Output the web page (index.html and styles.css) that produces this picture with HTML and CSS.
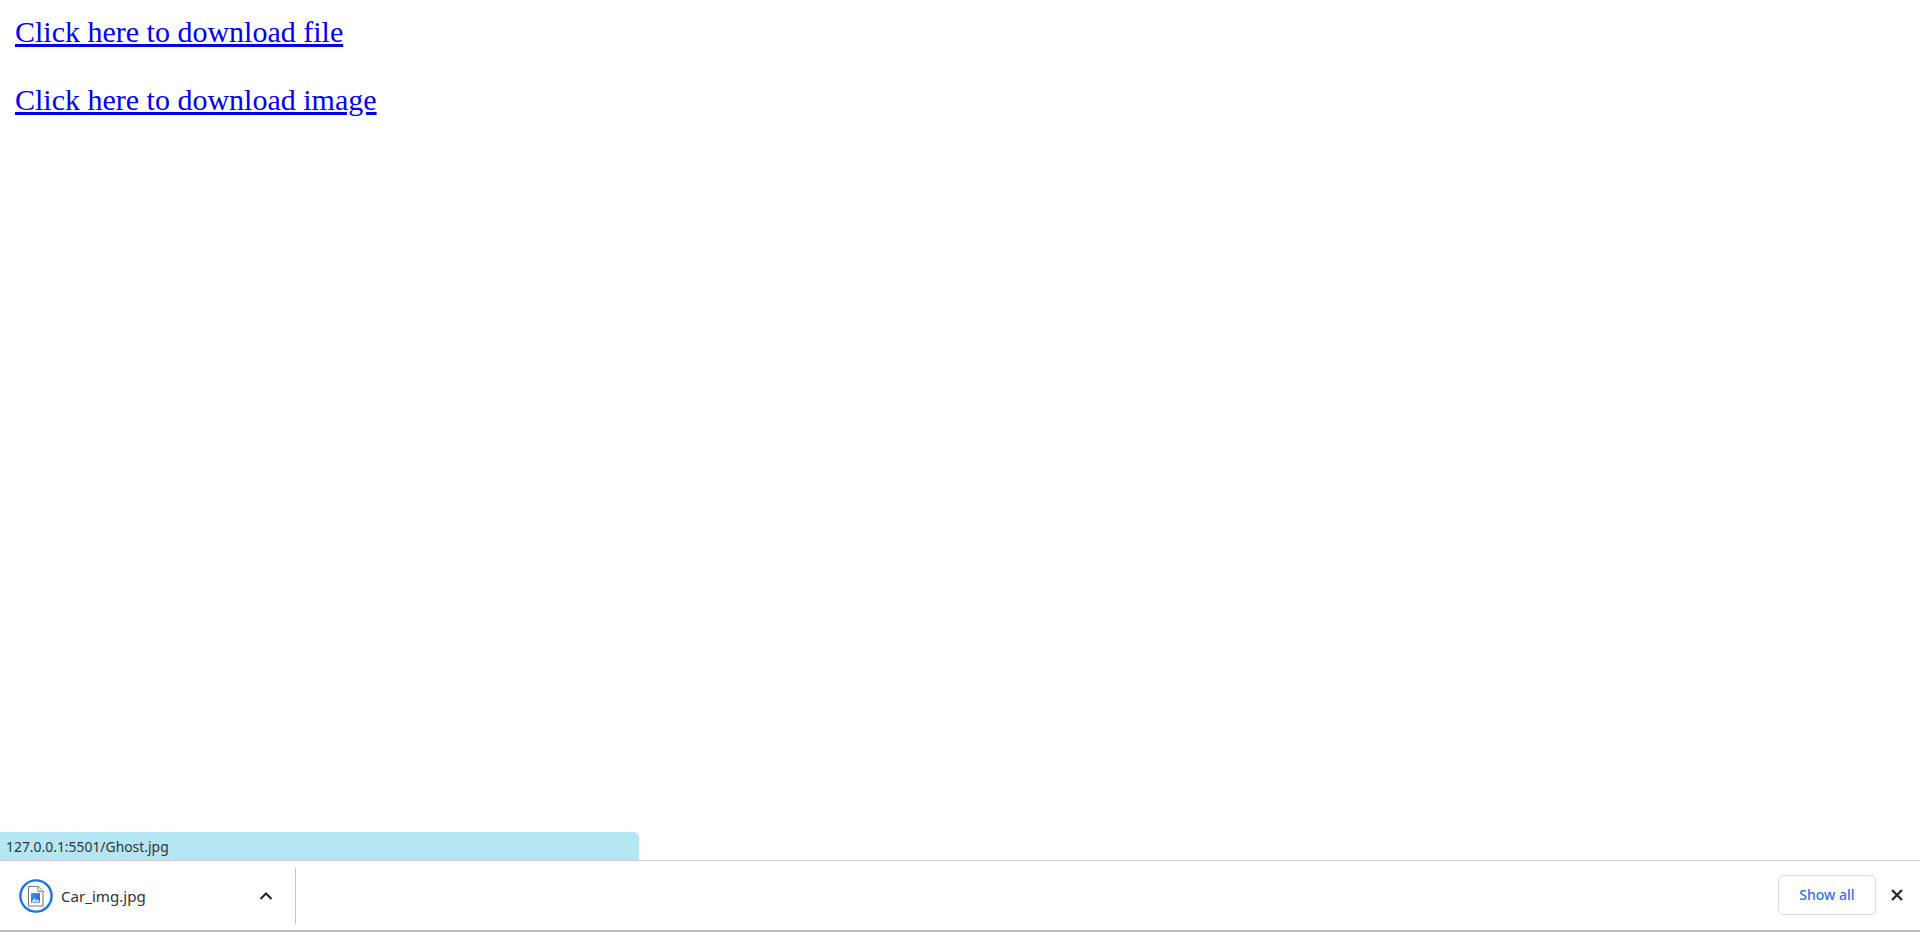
FILE: index.html
```html
<!DOCTYPE html>
<html lang="en">
<head>
<meta charset="utf-8">
<title>Downloads</title>
<link rel="stylesheet" href="styles.css">
</head>
<body>
<main class="content">
  <p class="line"><a href="#">Click here to download file</a></p>
  <p class="line"><a href="#">Click here to download image</a></p>
</main>
<div class="status">127.0.0.1:5501/Ghost.jpg</div>
<footer class="shelf">
  <div class="item">
    <svg class="file-icon" width="36" height="36" viewBox="0 0 36 36" aria-hidden="true">
      <defs>
        <linearGradient id="pic" x1="0" y1="0" x2="1" y2="1">
          <stop offset="0" stop-color="#39a0f0"/>
          <stop offset="1" stop-color="#3a55c8"/>
        </linearGradient>
      </defs>
      <circle cx="18" cy="18" r="15.6" fill="none" stroke="#1a73e8" stroke-width="2.4"/>
      <path d="M10.500 8.500h9.500l5 5v14.500h-14.500z" fill="#fff" stroke="#7a7a7a" stroke-width="1.100"/>
      <path d="M20 8.500v5h5" fill="#eee" stroke="#8a8a8a" stroke-width="1"/>
      <rect x="13" y="15" width="9" height="10" fill="url(#pic)"/>
      <path d="M13 24.500l3.500-4.500 2 2.500 1.500-1.500 2 3.500z" fill="#bfe3fb"/>
    </svg>
    <span class="name">Car_img.jpg</span>
    <svg class="chevron" width="14" height="9" viewBox="0 0 14 9" aria-hidden="true">
      <path d="M1.500 8l5.500-5.500 5.500 5.500" fill="none" stroke="#222" stroke-width="2"/>
    </svg>
  </div>
  <div class="divider"></div>
  <div class="spacer"></div>
  <button class="show-all" type="button">Show all</button>
  <svg class="close" width="14" height="14" viewBox="0 0 14 14" aria-hidden="true">
    <path d="M2 2l10 10M12 2L2 12" fill="none" stroke="#2b2b2b" stroke-width="2.400"/>
  </svg>
</footer>
</body>
</html>
```
FILE: styles.css
```css
html, body {
  margin: 0;
  height: 100%;
}
body {
  display: flex;
  flex-direction: column;
  height: 932px;
  overflow: hidden;
  background: #fff;
  font-family: "Liberation Serif", "Times New Roman", serif;
  position: relative;
}
.content {
  flex: 1;
  padding: 0 15px;
}
.line {
  margin: 15px 0 34px;
  font-size: 30px;
  line-height: 34px;
}
.line a {
  color: #0000ee;
  text-decoration-thickness: 3px;
}
.status {
  position: absolute;
  left: 0;
  bottom: 72px;
  width: 639px;
  height: 28px;
  padding-left: 6px;
  box-sizing: border-box;
  background: #b5e7f3;
  border-top-right-radius: 5px;
  font: 13.900px/29px "Noto Sans", sans-serif;
  color: #333;
}
.shelf {
  height: 72px;
  box-sizing: border-box;
  border-top: 1px solid #cfcfcf;
  border-bottom: 2px solid #bcbcbc;
  display: flex;
  align-items: center;
  font-family: "Noto Sans", sans-serif;
}
.item {
  width: 295px;
  display: flex;
  align-items: center;
}
.file-icon {
  margin-left: 18px;
  flex: none;
}
.name {
  margin-left: 7px;
  flex: 1;
  font-size: 15.100px;
  color: #333;
}
.chevron {
  margin-right: 22px;
  flex: none;
}
.divider {
  width: 1px;
  height: 56px;
  background: #c4c4c4;
}
.spacer {
  flex: 1;
}
.show-all {
  width: 98px;
  height: 40px;
  background: #fff;
  border: 1px solid #dadce0;
  border-radius: 5px;
  color: #2f6fe4;
  font: 500 14px "Noto Sans", sans-serif;
  margin-right: 14px;
  position: relative;
  top: -1px;
}
.close {
  margin-right: 16px;
  flex: none;
  position: relative;
  top: -1px;
}
```
